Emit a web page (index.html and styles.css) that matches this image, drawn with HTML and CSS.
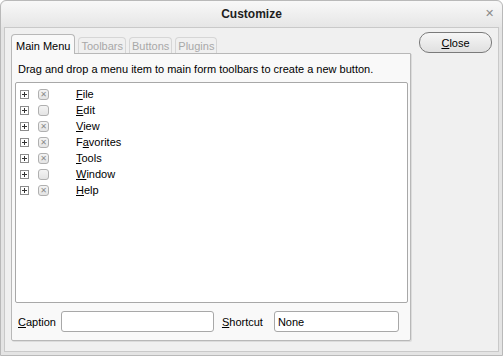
FILE: index.html
```html
<!DOCTYPE html>
<html lang="en">
  <head>
    <title>Customize</title>
    <meta charset="UTF-8" />
    <link rel="stylesheet" href="styles.css">
  </head>
  <body>
    <div class="window">
      <div class="titlebar">
        <span class="title">Customize</span>
        <span class="close-x">&#x2715;</span>
      </div>
      <div class="client">
        <div class="main">
          <div class="tabs">
            <div class="tab active">Main Menu</div>
            <div class="tab">Toolbars</div>
            <div class="tab">Buttons</div>
            <div class="tab">Plugins</div>
          </div>
          <div class="panel">
            <p class="hint">Drag and drop a menu item to main form toolbars to create a new button.</p>
            <div class="tree">
              <div class="row"><span class="plus"></span><span class="check on"></span><span class="label"><u>F</u>ile</span></div>
              <div class="row"><span class="plus"></span><span class="check"></span><span class="label"><u>E</u>dit</span></div>
              <div class="row"><span class="plus"></span><span class="check on"></span><span class="label"><u>V</u>iew</span></div>
              <div class="row"><span class="plus"></span><span class="check on"></span><span class="label">F<u>a</u>vorites</span></div>
              <div class="row"><span class="plus"></span><span class="check on"></span><span class="label"><u>T</u>ools</span></div>
              <div class="row"><span class="plus"></span><span class="check"></span><span class="label"><u>W</u>indow</span></div>
              <div class="row"><span class="plus"></span><span class="check on"></span><span class="label"><u>H</u>elp</span></div>
            </div>
            <div class="fields">
              <span class="field-label"><u>C</u>aption</span>
              <input class="input caption" type="text" value="">
              <span class="field-label"><u>S</u>hortcut</span>
              <input class="input shortcut" type="text" value="None">
            </div>
          </div>
        </div>
        <div class="side">
          <button class="button"><u>C</u>lose</button>
        </div>
      </div>
    </div>
  </body>
</html>
```

FILE: styles.css
```css
* {
  margin: 0;
  padding: 0;
  box-sizing: border-box;
}

body {
  font-family: 'Liberation Sans', Arial, sans-serif;
  font-size: 11px;
  color: #000;
  background: #fff;
  width: 503px;
  height: 356px;
  overflow: hidden;
}

.window {
  width: 503px;
  height: 356px;
  background: #e4e4e4;
  border: 1px solid #b9b9b9;
  border-radius: 6px 6px 0 0;
  display: flex;
  flex-direction: column;
  padding: 0 3px 3px 3px;
}

.titlebar {
  height: 26px;
  display: flex;
  align-items: center;
  justify-content: center;
  position: relative;
  background: linear-gradient(#f8f8f8, #e6e6e6);
  margin: 0 -3px;
  border-radius: 6px 6px 0 0;
}

.title {
  font-weight: bold;
  font-size: 12px;
  color: #1e1e1e;
}

.close-x {
  position: absolute;
  right: 8px;
  top: 6px;
  font-size: 11px;
  color: #8a8a8a;
}

.client {
  flex: 1;
  display: flex;
  background: #f0f0f0;
  border: 1px solid #c9c9c9;
  padding: 6px 6px 10px 6px;
}

.main {
  width: 400px;
  display: flex;
  flex-direction: column;
}

.tabs {
  display: flex;
  height: 19px;
}

.tab {
  height: 16px;
  padding: 2px 2px 0 2px;
  margin-right: 3px;
  margin-top: 3px;
  border: 1px solid #d6d6d6;
  border-bottom: none;
  border-radius: 4px 4px 0 0;
  color: #a8a8a8;
}

.tab.active {
  color: #000;
  background: #f9f9f9;
  border-color: #b8b8b8;
  margin-top: 0;
  padding: 5px 4px 0 4px;
  height: 20px;
  position: relative;
  z-index: 1;
}

.panel {
  flex: 1;
  background: #f9f9f9;
  border: 1px solid #b8b8b8;
  border-radius: 0 0 2px 2px;
  display: flex;
  flex-direction: column;
  padding: 8px 2px 8px 3px;
  box-shadow: 1px 1px 0 #dcdcdc;
}

.hint {
  padding-left: 3px;
  margin-bottom: 6px;
  line-height: 14px;
}

.tree {
  flex: 1;
  background: #fff;
  border: 1px solid #a8a8a8;
  border-radius: 2px;
  padding: 3px 0 0 3px;
}

.row {
  height: 16px;
  display: flex;
  align-items: center;
}

.plus {
  width: 9px;
  height: 9px;
  border: 1px solid #8c8c8c;
  background: #fff;
  position: relative;
  margin-left: 1px;
}

.plus::before,
.plus::after {
  content: '';
  position: absolute;
  background: #333;
}

.plus::before {
  left: 1px;
  top: 3px;
  width: 5px;
  height: 1px;
}

.plus::after {
  left: 3px;
  top: 1px;
  width: 1px;
  height: 5px;
}

.check {
  width: 11px;
  height: 11px;
  margin-left: 9px;
  border: 1px solid #b0b0b0;
  border-radius: 3px;
  background: linear-gradient(#f4f4f4, #e4e4e4);
  position: relative;
}

.check.on::before {
  content: '\2715';
  font-family: 'DejaVu Sans', sans-serif;
  font-size: 8px;
  color: #8a8a8a;
  position: absolute;
  left: 0;
  top: 0;
  width: 9px;
  height: 9px;
  line-height: 9px;
  text-align: center;
}

.label {
  margin-left: 27px;
  line-height: 16px;
}

.fields {
  display: flex;
  align-items: center;
  margin-top: 8px;
  padding-left: 3px;
}

.input {
  height: 21px;
  border: 1px solid #a8a8a8;
  border-radius: 3px;
  background: #fff;
  font-family: inherit;
  font-size: 11px;
  padding: 0 3px;
}

.caption {
  width: 153px;
  margin-left: 5px;
  margin-right: 8px;
}

.shortcut {
  width: 125px;
  margin-left: 11px;
}

.side {
  flex: 1;
  display: flex;
  justify-content: flex-end;
  align-items: flex-start;
}

.button {
  width: 73px;
  height: 21px;
  margin-top: -2px;
  border: 1px solid #7a7a7a;
  border-radius: 10px;
  background: linear-gradient(#f6f6f6, #e0e0e0);
  font-family: inherit;
  font-size: 11px;
  color: #000;
}
```
